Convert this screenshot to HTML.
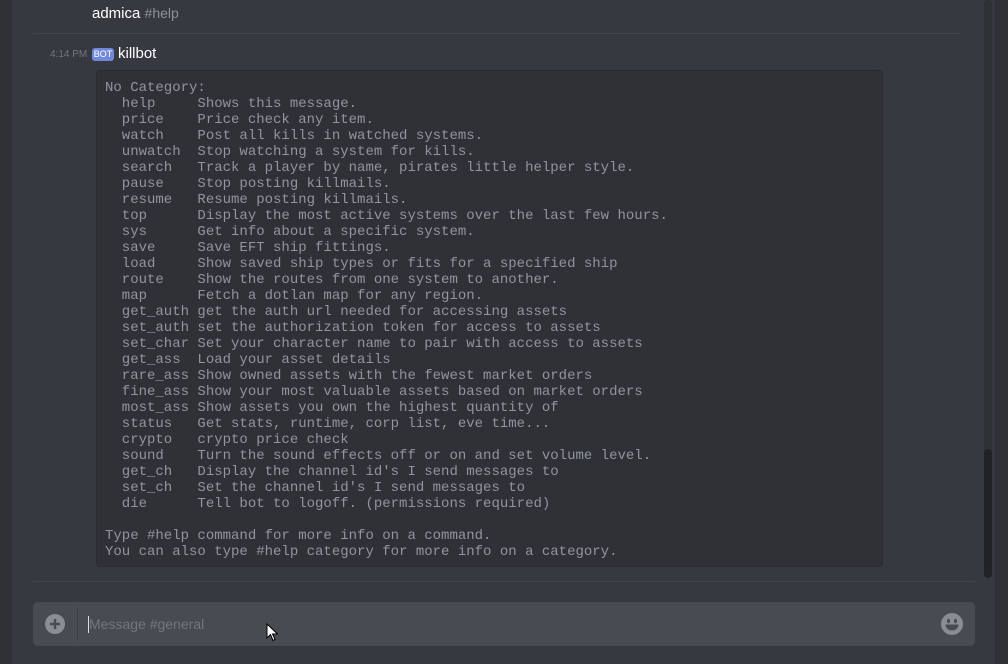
<!DOCTYPE html>
<html><head><meta charset="utf-8"><style>
body{margin:0;width:1008px;height:664px;background:#36393f;position:relative;overflow:hidden;font-family:"Liberation Sans",sans-serif}
.l{position:absolute;left:0;top:0;width:12px;height:664px;background:#2f3136}
.r{position:absolute;left:995px;top:0;width:13px;height:664px;background:#2f3136}
.track{position:absolute;left:984px;top:0;width:8px;height:578px;background:#2e3136;border-radius:4px}
.thumb{position:absolute;left:984px;top:449px;width:8px;height:129px;background:#202225;border-radius:4px}
.hdr{position:absolute;left:92px;top:5px;font-size:15px;color:#fff}
.hdr span{color:#8e9297;font-size:14px}
.div{position:absolute;height:1px;background:#42454a}
.time{position:absolute;left:50px;top:49px;font-size:10px;color:#72767d}
.bot{position:absolute;left:92px;top:48px;width:22px;height:13px;background:#7289da;border-radius:3px;color:#fff;font-size:9px;line-height:13px;text-align:center}
.name{position:absolute;left:118px;top:45px;font-size:15px;color:#fff}
pre{position:absolute;left:96px;top:70px;width:769px;height:479px;margin:0;padding:9px 8px 7px 8px;background:#2f3136;border:1px solid #282b30;border-radius:4px;font-family:"Liberation Mono",monospace;font-size:14px;line-height:16px;color:#8f969c}
.inp{position:absolute;left:33px;top:602px;width:942px;height:44px;background:#484b51;border-radius:5px}
.plus{position:absolute;left:12px;top:12px;width:20px;height:20px;border-radius:50%;background:#8a8d92}
.sep{position:absolute;left:44px;top:5px;width:1px;height:34px;background:#3c3f44}
.ph{position:absolute;left:56px;top:14px;font-size:14px;color:#72767d}
.caret{position:absolute;left:55px;top:14px;width:1px;height:17px;background:#dcddde}
</style></head><body>
<div class="l"></div><div class="r"></div><div class="track"></div><div class="thumb"></div>
<div class="hdr">admica <span>#help</span></div>
<div class="div" style="left:33px;top:33px;width:927px"></div>
<div class="time">4:14 PM</div>
<div class="bot">BOT</div>
<div class="name">killbot</div>
<pre>No Category:
  help     Shows this message.
  price    Price check any item.
  watch    Post all kills in watched systems.
  unwatch  Stop watching a system for kills.
  search   Track a player by name, pirates little helper style.
  pause    Stop posting killmails.
  resume   Resume posting killmails.
  top      Display the most active systems over the last few hours.
  sys      Get info about a specific system.
  save     Save EFT ship fittings.
  load     Show saved ship types or fits for a specified ship
  route    Show the routes from one system to another.
  map      Fetch a dotlan map for any region.
  get_auth get the auth url needed for accessing assets
  set_auth set the authorization token for access to assets
  set_char Set your character name to pair with access to assets
  get_ass  Load your asset details
  rare_ass Show owned assets with the fewest market orders
  fine_ass Show your most valuable assets based on market orders
  most_ass Show assets you own the highest quantity of
  status   Get stats, runtime, corp list, eve time...
  crypto   crypto price check
  sound    Turn the sound effects off or on and set volume level.
  get_ch   Display the channel id's I send messages to
  set_ch   Set the channel id's I send messages to
  die      Tell bot to logoff. (permissions required)

Type #help command for more info on a command.
You can also type #help category for more info on a category.</pre>
<div class="div" style="left:33px;top:581px;width:942px"></div>
<div class="inp">
<div class="plus"><svg width="20" height="20"><path d="M10 5v10M5 10h10" stroke="#484b51" stroke-width="2.4"/></svg></div>
<div class="sep"></div>
<div class="caret"></div>
<div class="ph">Message #general</div>
<svg style="position:absolute;left:908px;top:11px" width="22" height="22"><circle cx="11" cy="11" r="11" fill="#8a8d92"/><ellipse cx="7.5" cy="8" rx="1.5" ry="2.2" fill="#484b51"/><ellipse cx="14.5" cy="8" rx="1.5" ry="2.2" fill="#484b51"/><path d="M4.5 11.5h13a6.5 6 0 0 1-13 0z" fill="#484b51"/></svg>
</div>
<svg style="position:absolute;left:266px;top:623px" width="12" height="19"><path d="M1 1v14l3.5-3.5 2.5 6 2-1-2.5-5.5h5z" fill="#fff" stroke="#000" stroke-width="1"/></svg>
</body></html>
